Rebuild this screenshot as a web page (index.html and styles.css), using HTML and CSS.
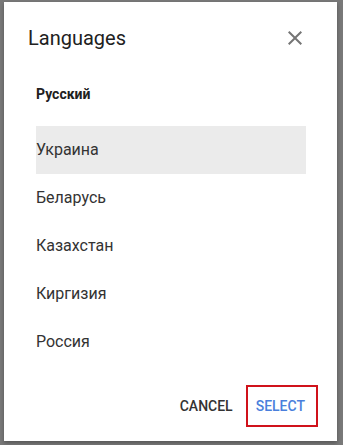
FILE: index.html
```html
<!DOCTYPE html>
<html lang="ru">
<head>
  <meta charset="UTF-8">
  <meta name="viewport" content="width=device-width, initial-scale=1.0">
  <title>Languages</title>
  <link rel="stylesheet" href="styles.css">
</head>
<body>
  <div class="dialog">
    <div class="dialog-header">
      <h2>Languages</h2>
      <button class="close-btn" aria-label="Close">
        <svg width="24" height="24" viewBox="0 0 24 24">
          <path d="M19 6.41L17.59 5 12 10.59 6.41 5 5 6.41 10.59 12 5 17.59 6.41 19 12 13.41 17.59 19 19 17.59 13.41 12z" fill="#757575"/>
        </svg>
      </button>
    </div>

    <div class="lang-list">
      <div class="lang-group">Русский</div>
      <div class="lang-item selected">Украина</div>
      <div class="lang-item">Беларусь</div>
      <div class="lang-item">Казахстан</div>
      <div class="lang-item">Киргизия</div>
      <div class="lang-item">Россия</div>
    </div>

    <div class="dialog-actions">
      <button class="text-btn">CANCEL</button>
      <button class="text-btn primary highlighted">SELECT</button>
    </div>
  </div>
</body>
</html>
```

FILE: styles.css
```css
body {
  margin: 0;
  background-color: #797979;
  font-family: Roboto, "Liberation Sans", sans-serif;
  height: 445px;
  overflow: hidden;
}
.dialog {
  background-color: white;
  margin: 2px 0 0 4px;
  width: 333px;
  height: 439px;
  box-sizing: border-box;
  box-shadow: 0 2px 4px rgba(0, 0, 0, 0.3);
  display: flex;
  flex-direction: column;
}
.dialog-header {
  display: flex;
  align-items: center;
  justify-content: space-between;
  padding: 24px 30px 0 24px;
}
.dialog-header h2 {
  margin: 0;
  font-size: 20px;
  font-weight: 400;
  line-height: 24px;
  color: #212121;
}
.close-btn {
  background: none;
  border: none;
  padding: 0;
  width: 24px;
  height: 24px;
  cursor: pointer;
}
.close-btn svg {
  display: block;
}
.lang-list {
  padding: 20px 31px 0 32px;
}
.lang-group {
  font-size: 14px;
  font-weight: 700;
  color: #212121;
  line-height: 48px;
  margin-bottom: 8px;
}
.lang-item {
  font-size: 16px;
  color: #333;
  line-height: 48px;
  height: 48px;
}
.lang-item.selected {
  background-color: #ebebeb;
}
.dialog-actions {
  display: flex;
  justify-content: flex-end;
  gap: 8px;
  margin-top: auto;
  padding: 0 22px 17px 0;
}
.text-btn {
  background: none;
  border: none;
  font-family: inherit;
  font-size: 14px;
  font-weight: 500;
  color: #333;
  height: 36px;
  padding: 0 8px;
  cursor: pointer;
}
.text-btn.primary {
  color: #4a7fdc;
  padding: 0 10px 0 7px;
}
.text-btn.highlighted {
  outline: 2px solid #d0121b;
  outline-offset: 1px;
}
```
